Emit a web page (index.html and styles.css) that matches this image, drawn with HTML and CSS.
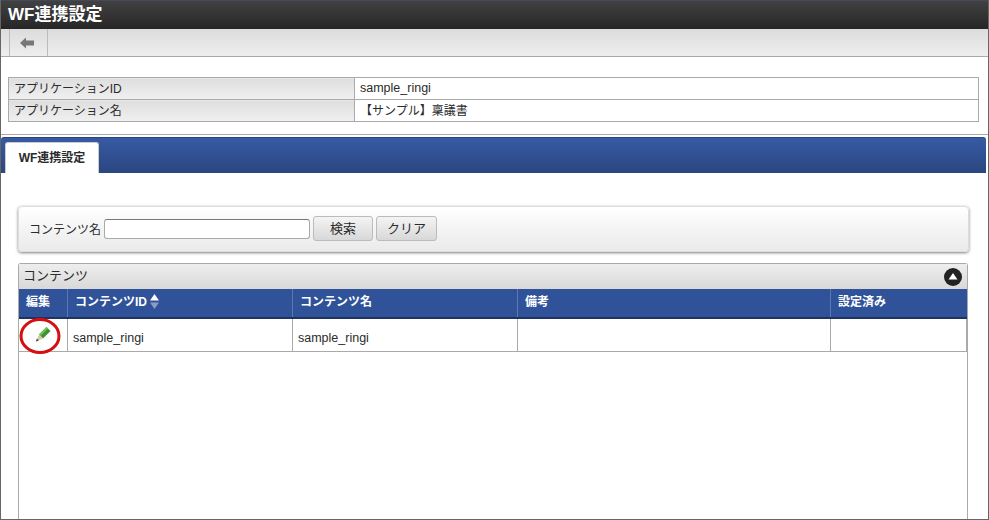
FILE: index.html
```html
<!DOCTYPE html>
<html lang="ja">
    <head>
        <meta charset="UTF-8">
        <title>WF連携設定</title>
        <link rel="stylesheet" href="styles.css">
    </head>
    <body>
        <div class="window">
            <!-- Title -->
            <div class="title-bar">WF連携設定</div>

            <!-- Toolbar -->
            <div class="toolbar">
                <a class="back-button">
                    <svg width="14" height="12" viewBox="0 0 14 12"><path d="M0 6 L6 0.5 V3.5 H14 V8.5 H6 V11.5 Z" fill="#777"/></svg>
                </a>
            </div>

            <!-- Application info -->
            <table class="info-table">
                <tr><th>アプリケーションID</th><td class="app-id">sample_ringi</td></tr>
                <tr><th>アプリケーション名</th><td>【サンプル】稟議書</td></tr>
            </table>
            <div class="separator"></div>

            <!-- Tabs -->
            <div class="tab-bar">
                <div class="tab">WF連携設定</div>
            </div>

            <!-- Search -->
            <div class="search-box">
                <label class="search-label">コンテンツ名</label>
                <input class="search-input" type="text">
                <button class="button first">検索</button>
                <button class="button">クリア</button>
            </div>

            <!-- Contents list -->
            <div class="panel">
                <div class="panel-header">
                    <span class="panel-title">コンテンツ</span>
                    <span class="toggle"><svg width="18" height="18" viewBox="0 0 18 18"><circle cx="9" cy="9" r="9" fill="#222"/><path d="M9 5 L13.5 11.5 H4.5 Z" fill="#fff"/></svg></span>
                </div>
                <table class="list-table">
                    <thead>
                        <tr>
                            <th class="col-edit">編集</th>
                            <th class="col-id">コンテンツID<svg class="sort" width="9" height="15" viewBox="0 0 9 15"><path d="M4.5 0 L9 6.5 H0 Z" fill="#fff"/><path d="M0 8.5 H9 L4.5 15 Z" fill="#8a9cc6"/></svg></th>
                            <th class="col-name">コンテンツ名</th>
                            <th class="col-note">備考</th>
                            <th>設定済み</th>
                        </tr>
                    </thead>
                    <tbody>
                        <tr>
                            <td class="edit-cell">
                                <svg class="pencil" width="16" height="16" viewBox="0 0 16 16"><path d="M4 8.5 L11.5 1 L15.5 5 L8 12.5 Z" fill="#3f9233"/><path d="M4 8.5 L11.5 1 L13 2.5 L5.5 10 Z" fill="#74bf58"/><path d="M4 8.5 L8 12.5 L1 15.5 Z" fill="#d8c8a0"/><path d="M1.8 12.6 L3.8 14.6 L1 15.5 Z" fill="#444"/></svg>
                                <svg class="circle" width="42" height="36" viewBox="0 0 42 36"><ellipse cx="21" cy="18" rx="19" ry="16.5" fill="none" stroke="#d40f0f" stroke-width="3"/></svg>
                            </td>
                            <td class="text-cell">sample_ringi</td>
                            <td class="text-cell">sample_ringi</td>
                            <td></td>
                            <td></td>
                        </tr>
                    </tbody>
                </table>
            </div>
        </div>
    </body>
</html>
```

FILE: styles.css
```css
html, body {
  margin: 0;
  height: 100%;
  overflow: hidden;
}

body {
  background-color: #fff;
  color: #2b2b2b;
  font-family: "Liberation Sans", "Noto Sans CJK JP", sans-serif;
  font-size: 12px;
}

.window {
  box-sizing: border-box;
  height: 520px;
  border-left: 1px solid #666;
  border-right: 1px solid #666;
  border-bottom: 1px solid #666;
  overflow: hidden;
}

/* Title */
.title-bar {
  height: 28px;
  margin-left: -1px;
  margin-right: -1px;
  padding-left: 8px;
  border-top: 1px solid #45485a;
  background: linear-gradient(#414141, #262626);
  color: #fff;
  font-size: 17px;
  font-weight: bold;
  line-height: 28px;
}

/* Toolbar */
.toolbar {
  display: flex;
  height: 27px;
  padding-left: 8px;
  border-bottom: 1px solid #aaa;
  background: linear-gradient(#dcdcdc, #eee);
}

.back-button {
  display: flex;
  align-items: center;
  justify-content: center;
  box-sizing: border-box;
  width: 39px;
  padding-right: 3px;
  border-left: 1px solid #bbb;
  border-right: 1px solid #bbb;
}

/* Application info */
.info-table {
  width: 971px;
  margin: 20px 0 0 7px;
  border-collapse: collapse;
  table-layout: fixed;
}

.info-table th,
.info-table td {
  height: 19px;
  padding: 0 5px 2px;
  border: 1px solid #aaa;
  text-align: left;
  font-weight: normal;
}

.info-table th {
  width: 335px;
  background: linear-gradient(#dedede, #f0f0f0);
}

.app-id {
  font-size: 12.5px;
}

.separator {
  height: 1px;
  margin-top: 12px;
  background-color: #aaa;
}

/* Tabs */
.tab-bar {
  display: flex;
  align-items: flex-end;
  box-sizing: border-box;
  width: 985px;
  height: 36px;
  margin-top: 2px;
  padding-left: 4px;
  border-top: 1px solid #2a4682;
  border-radius: 3px 3px 0 0;
  background: linear-gradient(#375aa4, #2b4680);
}

.tab {
  box-sizing: border-box;
  width: 94px;
  height: 31px;
  border: 1px solid #ccc;
  border-bottom: none;
  border-radius: 3px 3px 0 0;
  background-color: #fff;
  font-weight: bold;
  line-height: 30px;
  text-align: center;
}

/* Search */
.search-box {
  display: flex;
  align-items: center;
  box-sizing: border-box;
  width: 951px;
  height: 46px;
  margin: 33px 0 0 17px;
  padding-left: 10px;
  border: 1px solid #ddd;
  border-radius: 4px;
  background: linear-gradient(#fff, #eaeaea);
  box-shadow: 0 1px 3px rgba(0, 0, 0, 0.5);
}

.search-label {
  padding-bottom: 2px;
}

.search-input {
  box-sizing: border-box;
  width: 206px;
  height: 20px;
  margin: 0 0 0 3px;
  padding: 0;
  border: 1px solid #aaa;
  border-top-color: #777;
  border-radius: 3px;
  background-color: #fff;
}

.button {
  box-sizing: border-box;
  width: 61px;
  height: 25px;
  margin: -1px 0 0 3px;
  padding: 0 0 3px;
  border: 1px solid #bbb;
  border-radius: 3px;
  background: linear-gradient(#f4f4f4, #d8d8d8);
  color: #2b2b2b;
  font-family: inherit;
  font-size: 13px;
}

.button.first {
  width: 60px;
}

/* Contents list */
.panel {
  box-sizing: border-box;
  width: 950px;
  height: 300px;
  margin: 11px 0 0 17px;
  border: 1px solid #aaa;
  border-bottom: none;
  border-radius: 3px 3px 0 0;
}

.panel-header {
  display: flex;
  align-items: center;
  justify-content: space-between;
  height: 25px;
  padding: 0 5px 0 4px;
  background: linear-gradient(#eee, #d8d8d8);
}

.panel-title {
  padding-bottom: 4px;
  font-size: 13px;
}

.toggle {
  display: flex;
}

.list-table {
  width: 948px;
  border-collapse: collapse;
  table-layout: fixed;
}

.list-table th {
  height: 23px;
  padding: 0 0 5px 7px;
  border-bottom: 2px solid #1f3260;
  border-left: 1px solid #5b78b4;
  background-color: #305299;
  color: #fff;
  font-size: 12px;
  text-align: left;
}

.list-table th:first-child {
  border-left: none;
}

.list-table td {
  height: 32px;
  padding: 0 5px;
  border: 1px solid #aaa;
  border-top: none;
}

.list-table td.text-cell {
  height: 27px;
  padding-top: 5px;
  font-size: 12.5px;
}

.list-table tr td:first-child {
  border-left: none;
}

.col-edit {
  width: 41px;
}

.col-id,
.col-name {
  width: 217px;
}

.col-note {
  width: 305px;
}

.sort {
  margin-left: 3px;
  vertical-align: -3px;
}

.edit-cell {
  position: relative;
}

.pencil {
  display: block;
  margin: -2px auto 0;
}

.circle {
  position: absolute;
  left: 0;
  top: -1px;
}
```
